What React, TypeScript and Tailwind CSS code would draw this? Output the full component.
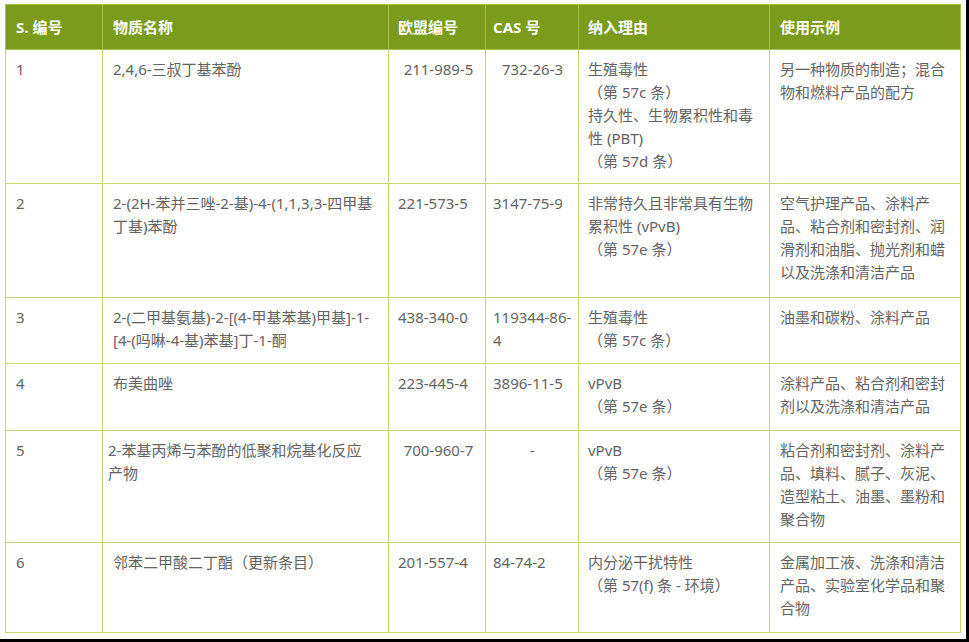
import React from "react";

type Cell = { lines: string[]; center?: boolean; pl?: string };

const rows: { h: string; cells: Cell[] }[] = [
  {
    h: "h-[134px]",
    cells: [
      { lines: ["1"] },
      { lines: ["2,4,6-三叔丁基苯酚"] },
      { lines: ["211-989-5"], center: true },
      { lines: ["732-26-3"], center: true },
      { lines: ["生殖毒性", "（第 57c 条）", "持久性、生物累积性和毒", "性 (PBT)", "（第 57d 条）"] },
      { lines: ["另一种物质的制造；混合", "物和燃料产品的配方"] },
    ],
  },
  {
    h: "h-[114px]",
    cells: [
      { lines: ["2"] },
      { lines: ["2-(2H-苯并三唑-2-基)-4-(1,1,3,3-四甲基", "丁基)苯酚"] },
      { lines: ["221-573-5"] },
      { lines: ["3147-75-9"] },
      { lines: ["非常持久且非常具有生物", "累积性 (vPvB)", "（第 57e 条）"] },
      { lines: ["空气护理产品、涂料产", "品、粘合剂和密封剂、润", "滑剂和油脂、抛光剂和蜡", "以及洗涤和清洁产品"] },
    ],
  },
  {
    h: "h-[66px]",
    cells: [
      { lines: ["3"] },
      { lines: ["2-(二甲基氨基)-2-[(4-甲基苯基)甲基]-1-", "[4-(吗啉-4-基)苯基]丁-1-酮"] },
      { lines: ["438-340-0"] },
      { lines: ["119344-86-", "4"] },
      { lines: ["生殖毒性", "（第 57c 条）"] },
      { lines: ["油墨和碳粉、涂料产品"] },
    ],
  },
  {
    h: "h-[67px]",
    cells: [
      { lines: ["4"] },
      { lines: ["布美曲唑"] },
      { lines: ["223-445-4"] },
      { lines: ["3896-11-5"] },
      { lines: ["vPvB", "（第 57e 条）"] },
      { lines: ["涂料产品、粘合剂和密封", "剂以及洗涤和清洁产品"] },
    ],
  },
  {
    h: "h-[112px]",
    cells: [
      { lines: ["5"] },
      { lines: ["2-苯基丙烯与苯酚的低聚和烷基化反应", "产物"], pl: "pl-[5px]" },
      { lines: ["700-960-7"], center: true },
      { lines: ["-"], center: true },
      { lines: ["vPvB", "（第 57e 条）"] },
      { lines: ["粘合剂和密封剂、涂料产", "品、填料、腻子、灰泥、", "造型粘土、油墨、墨粉和", "聚合物"] },
    ],
  },
  {
    h: "h-[90px]",
    cells: [
      { lines: ["6"] },
      { lines: ["邻苯二甲酸二丁酯（更新条目）"] },
      { lines: ["201-557-4"] },
      { lines: ["84-74-2"] },
      { lines: ["内分泌干扰特性", "（第 57(f) 条 - 环境）"] },
      { lines: ["金属加工液、洗涤和清洁", "产品、实验室化学品和聚", "合物"] },
    ],
  },
];

const headers = ["S. 编号", "物质名称", "欧盟编号", "CAS 号", "纳入理由", "使用示例"];
const colPl = ["pl-[10px]", "pl-[10px]", "pl-[9px]", "pl-[7px]", "pl-[9px]", "pl-[10px]"];

export default function App() {
  return (
    <div className="w-[969px] h-[642px] bg-black overflow-hidden">
      <div className="w-[966px] h-[639px] bg-white pt-[4px] pl-[5px] font-['Noto_Sans','Noto_Sans_CJK_SC',sans-serif] text-[15px] leading-[23px] text-[#636363]">
        <table className="border-collapse table-fixed w-[955px] border border-[#c6d86e]">
          <colgroup>
            <col className="w-[97px]" />
            <col className="w-[286px]" />
            <col className="w-[97px]" />
            <col className="w-[93px]" />
            <col className="w-[191px]" />
            <col className="w-[191px]" />
          </colgroup>
          <thead>
            <tr className="h-[45px] bg-[#7a9b1b]">
              {headers.map((h, i) => (
                <th
                  key={h}
                  className={`border border-[#a9c24c] ${colPl[i]} pr-[8px] text-left align-middle font-bold text-white whitespace-nowrap`}
                >
                  {h}
                </th>
              ))}
            </tr>
          </thead>
          <tbody>
            {rows.map((r, ri) => (
              <tr key={ri} className={r.h}>
                {r.cells.map((c, ci) => (
                  <td
                    key={ci}
                    className={`border border-[#c6d86e] align-top pt-[8px] pb-[8px] pr-[6px] ${c.pl ?? colPl[ci]} ${c.center ? "text-center" : "text-left"}`}
                  >
                    {c.lines.map((l, li) => (
                      <div key={li} className="whitespace-nowrap">
                        {l}
                      </div>
                    ))}
                  </td>
                ))}
              </tr>
            ))}
          </tbody>
        </table>
      </div>
    </div>
  );
}
